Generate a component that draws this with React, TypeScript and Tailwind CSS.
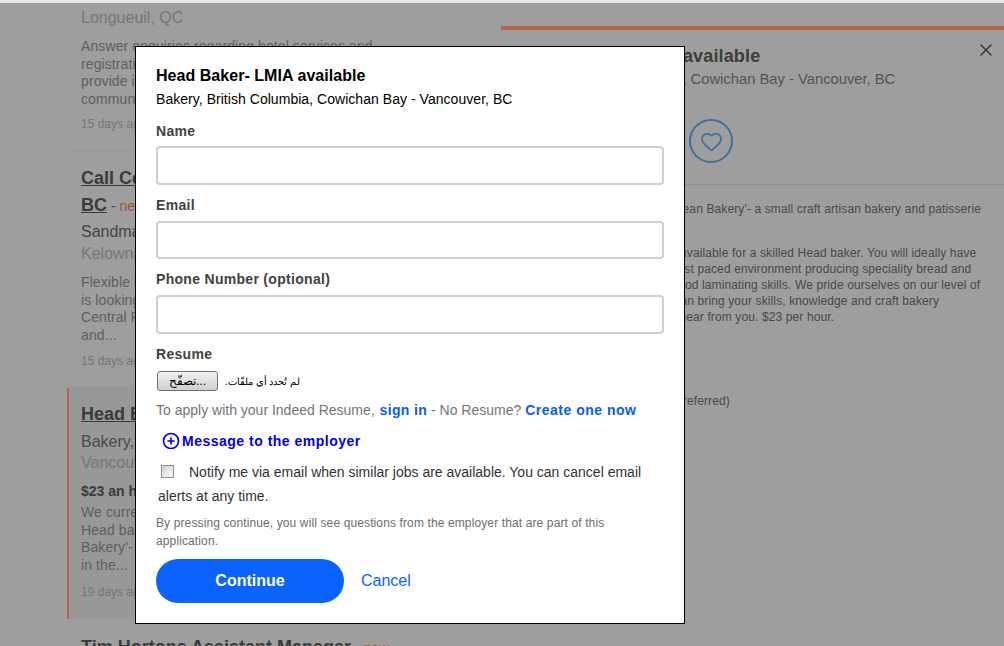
import React from "react";
import { CirclePlus, Heart, X } from "lucide-react";

const jobs = [
  {
    title: ["Call Centre Agent - Kelowna,", "BC"],
    isNew: true,
    company: "Sandman Hotel Group",
    place: "Kelowna, BC",
    salary: "",
    desc: ["Flexible hours and benefits. Sandman Hotel Group", "is looking for reservations agents for our", "Central Reservations office. Answer calls, emails", "and..."],
    age: "15 days ago",
  },
  {
    title: ["Head Baker- LMIA available"],
    isNew: false,
    company: "Bakery, British Columbia, Cowichan Bay -",
    place: "Vancouver, BC",
    salary: "$23 an hour",
    desc: ["We currently have a position available for a skilled", "Head baker at our bakery, known as 'Artisan", "Bakery'- a small craft artisan bakery and patisserie", "in the..."],
    age: "19 days ago",
    active: true,
  },
];

function JobCard({ job }: { job: (typeof jobs)[number] }) {
  return (
    <div
      className={
        job.active
          ? "relative h-[231px] bg-[#f5f5f5] pl-[14px] pt-[13px]"
          : "h-[236px] border-b border-[#f5f5f5] pl-[14px] pt-[13px]"
      }
    >
      {job.active && <div className="absolute inset-y-0 left-0 z-10 w-[2px] bg-[#b5644a]" />}
      {job.title.map((line, i) => (
        <div key={line} className="h-[27px] text-[18px] leading-[27px] text-[#5f5f5f]">
          <span className="font-bold underline">{line}</span>
          {job.isNew && i === job.title.length - 1 && (
            <span className="text-[14px] text-[#777]">
              {" "}
              - <span className="text-[#ff8a66]">new</span>
            </span>
          )}
        </div>
      ))}
      <div className={job.active ? "mt-[3px] text-[16px] leading-[22px] text-[#7a7a7a]" : "mt-[2px] text-[16px] leading-[22px] text-[#6e6e6e]"}>
        {job.company}
      </div>
      <div className={job.active ? "text-[16px] leading-[20px] text-[#c0c0c0]" : "text-[16px] leading-[21px] text-[#c0c0c0]"}>{job.place}</div>
      {job.salary && <div className="mt-[9px] text-[14px] font-bold leading-[18px] text-[#5f5f5f]">{job.salary}</div>}
      <div className={job.salary ? "mt-[4px]" : "mt-[10px]"}>
        {job.desc.map((line) => (
          <div key={line} className="h-[17.5px] text-[14px] leading-[17.5px] tracking-[0.1px] text-[#999]">
            {line}
          </div>
        ))}
      </div>
      <div className={job.salary ? "mt-[10px] text-[12px] leading-[16px] text-[#c0c0c0]" : "mt-[9px] text-[12px] leading-[16px] text-[#c0c0c0]"}>{job.age}</div>
    </div>
  );
}

function Field({ label }: { label: string }) {
  return (
    <div className="group mt-[12px] first:mt-0">
      <label className="block text-[14px] font-bold leading-[16px] tracking-[0.3px] text-[#424242] group-first:leading-[18px]">{label}</label>
      <input
        type="text"
        className="mt-[8px] block h-[38.5px] w-[508px] rounded-[4px] border-2 border-[#cfcfcf] bg-white outline-none group-first:mt-[6px]"
      />
    </div>
  );
}

function ApplyModal() {
  return (
    <div className="absolute left-[135px] top-[46px] h-[578px] w-[550px] border border-black bg-white pl-5 pt-[19px]">
      <h2 className="text-[16px] font-bold leading-[20px] tracking-[0.04px] text-black">Head Baker- LMIA available</h2>
      <p className="mt-[3px] text-[14px] leading-[20px] tracking-[0.04px] text-black">Bakery, British Columbia, Cowichan Bay - Vancouver, BC</p>

      <div className="mt-[13px]">
        <Field label="Name" />
        <Field label="Email" />
        <Field label="Phone Number (optional)" />
      </div>

      <div className="mt-[11.5px] text-[14px] font-bold leading-[18px] tracking-[0.3px] text-[#424242]">Resume</div>
      <div className="mt-[8px] flex h-[20px] items-center">
        <button
          type="button"
          className="ml-px flex h-[20px] w-[61px] items-center justify-center rounded-[3px] border border-[#707070] bg-gradient-to-b from-[#f2f2f2] to-[#d0d0d0] text-[12px] leading-none text-black"
        >
          تصفّح...
        </button>
        <span className="ml-[7px] text-[10px] text-black" dir="rtl">
          لم تُحدد أي ملفّات.
        </span>
      </div>

      <p className="mt-[9px] text-[14px] leading-[20px] text-[#757575]">
        To apply with your Indeed Resume, <a className="ml-px font-bold tracking-[0.35px] text-[#0a5cf5]">sign in</a> - No Resume?{" "}
        <a className="font-bold tracking-[0.5px] text-[#0a5cf5]">Create one now</a>
      </p>

      <div className="ml-[5.5px] mt-[11px] flex h-[20px] items-center gap-[2.5px] text-[14px] font-bold tracking-[0.5px] text-[#0000ee]">
        <CirclePlus className="h-[18px] w-[18px]" strokeWidth={2.2} />
        Message to the employer
      </div>

      <div className="ml-[2px] mt-[9px] w-[500px] text-[14px] leading-[24px] text-[#333]">
        <input
          type="checkbox"
          className="ml-[3px] mr-[15px] h-[13px] w-[13px] appearance-none border border-[#8e8e8e] bg-gradient-to-br from-[#d4d4d4] to-[#fafafa] align-[-1px]"
        />
        Notify me via email when similar jobs are available. You can cancel email alerts at any time.
      </div>

      <p className="mt-[6px] w-[500px] text-[12px] leading-[18px] tracking-[0.12px] text-[#6d6d6d]">
        By pressing continue, you will see questions from the employer that are part of this application.
      </p>

      <div className="mt-[9px] flex items-center">
        <button type="button" className="h-[44px] w-[188px] rounded-full bg-[#0a63ff] text-[16px] font-bold text-white">
          Continue
        </button>
        <a className="ml-[17px] text-[16px] text-[#0a63ff]">Cancel</a>
      </div>
    </div>
  );
}

export default function App() {
  return (
    <div className="relative h-[646px] w-[1004px] overflow-hidden bg-white font-['Liberation_Sans',Arial,sans-serif]">
      <div className="flex h-full items-start">
        {/* job list */}
        <div className="ml-[67px] w-[410px] shrink-0">
          <div className="h-[152px] border-b border-[#f5f5f5] pl-[14px] pt-[8px]">
            <div className="text-[16px] leading-[20px] text-[#c0c0c0]">Longueuil, QC</div>
            <div className="mt-[10px]">
              {[
                "Answer enquiries regarding hotel services and",
                "registration by phone, email and in person, and",
                "provide information on available rooms and the",
                "community and...",
              ].map((line) => (
                <div key={line} className="h-[17.5px] text-[14px] leading-[17.5px] tracking-[0.1px] text-[#999]">
                  {line}
                </div>
              ))}
            </div>
            <div className="mt-[8px] text-[12px] leading-[16px] text-[#c0c0c0]">15 days ago</div>
          </div>
          {jobs.map((job) => (
            <JobCard key={job.age} job={job} />
          ))}
          <div className="pl-[14px] pt-[15px] text-[18px] leading-[27px] text-[#5f5f5f]">
            <span className="font-bold underline">Tim Hortons Assistant Manager</span>
            <span className="text-[14px] text-[#777]">
              {" "}
              - <span className="text-[#ff8a66]">new</span>
            </span>
          </div>
        </div>

        {/* job detail */}
        <div className="relative ml-[24px] mt-[26px] w-[503px] shrink-0 pt-[4px]">
          <div className="absolute inset-x-0 top-0 z-10 h-[4px] bg-[#b5644a]" />
          <button type="button" className="absolute right-[8px] top-[14px] text-[#555]">
            <X className="h-[20px] w-[20px]" strokeWidth={1.6} />
          </button>
          <div className="h-[155px] border-b border-[#e6e6e6] pl-[21px] pt-[15px]">
            <div className="text-[18px] font-bold leading-[22px] tracking-[0.15px] text-[#636363]">Head Baker- LMIA available</div>
            <div className="mt-[1px] text-[14.75px] leading-[22px] text-[#888]">Bakery, British Columbia, Cowichan Bay - Vancouver, BC</div>
            <div className="ml-[167px] mt-[29px] flex h-[44px] w-[44px] items-center justify-center rounded-full border-2 border-[#6eb0ff] text-[#6eb0ff]">
              <Heart className="h-[23px] w-[23px]" strokeWidth={1.8} />
            </div>
          </div>
          <div className="whitespace-nowrap pl-[21px] pt-[16px] text-[12px] leading-[16px] tracking-[0.12px] text-[#777]">
            <div>A Cowichan Bay's 'The European Bakery'- a small craft artisan bakery and patisserie</div>
            <div className="mt-[28px]">We currently have a position available for a skilled Head baker. You will ideally have</div>
            <div>experiences of working in a fast paced environment producing speciality bread and</div>
            <div>pastries and you also have good laminating skills. We pride ourselves on our level of</div>
            <div>quality and flavour so if you can bring your skills, knowledge and craft bakery</div>
            <div>experience we would love to hear from you. $23 per hour.</div>
            <div className="mt-[68px]">Bakery Experience 3 years (preferred)</div>
          </div>
        </div>
      </div>

      {/* dim layer */}
      <div className="absolute inset-0 top-[3px] bg-black/38" />
      <div className="absolute inset-x-0 top-0 h-[3px] bg-[#e6e6e6]" />

      <ApplyModal />
    </div>
  );
}
